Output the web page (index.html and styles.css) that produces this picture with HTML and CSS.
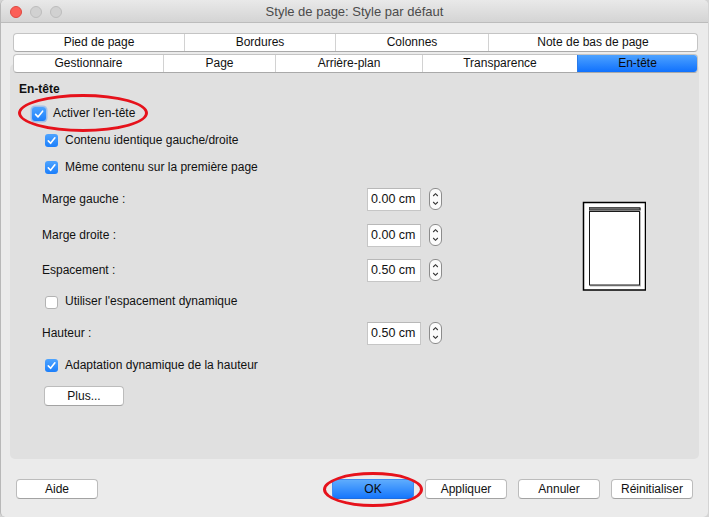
FILE: index.html
```html
<!DOCTYPE html>
<html lang="fr">
<head>
<meta charset="utf-8">
<title>Style de page</title>
<link rel="stylesheet" href="styles.css">
</head>
<body>
<div class="window">
  <div class="titlebar">
    <div class="lights">
      <span class="light red"></span>
      <span class="light gray"></span>
      <span class="light gray"></span>
    </div>
    <div class="title">Style de page: Style par défaut</div>
    <div></div>
  </div>

  <div class="tabs">
    <div class="tabrow r1">
      <div class="tab">Pied de page</div>
      <div class="tab">Bordures</div>
      <div class="tab">Colonnes</div>
      <div class="tab">Note de bas de page</div>
    </div>
    <div class="tabrow r2">
      <div class="tab">Gestionnaire</div>
      <div class="tab">Page</div>
      <div class="tab">Arrière-plan</div>
      <div class="tab">Transparence</div>
      <div class="tab sel">En-tête</div>
    </div>
  </div>

  <div class="panel">
    <div class="form">
      <div class="row h-head"><span class="section">En-tête</span></div>
      <div class="row h32 ind1">
        <span class="cb on focus"><svg width="14" height="14" viewBox="0 0 14 14"><path d="M3.6 7.4 L6 9.9 L10.6 4.2" fill="none" stroke="#fff" stroke-width="1.6" stroke-linecap="round" stroke-linejoin="round"/></svg></span>
        <span class="lbl">Activer l'en-tête</span>
      </div>
      <div class="row h22 ind2">
        <span class="cb on"><svg width="13" height="13" viewBox="0 0 13 13"><path d="M3.3 6.9 L5.6 9.3 L9.9 3.8" fill="none" stroke="#fff" stroke-width="1.6" stroke-linecap="round" stroke-linejoin="round"/></svg></span>
        <span class="lbl">Contenu identique gauche/droite</span>
      </div>
      <div class="row h32 ind2">
        <span class="cb on"><svg width="13" height="13" viewBox="0 0 13 13"><path d="M3.3 6.9 L5.6 9.3 L9.9 3.8" fill="none" stroke="#fff" stroke-width="1.6" stroke-linecap="round" stroke-linejoin="round"/></svg></span>
        <span class="lbl">Même contenu sur la première page</span>
      </div>
      <div class="row h32 field">
        <span class="flabel">Marge gauche :</span>
        <span class="input">0.00 cm</span>
        <span class="spin"><svg width="13" height="22" viewBox="0 0 13 22"><rect x="0.5" y="0.5" width="12" height="21" rx="5.5" fill="#fbfbfb" stroke="#8c8c8c"/><path d="M4.2 8 L6.5 5.7 L8.8 8" fill="none" stroke="#333" stroke-width="1.1"/><path d="M4.2 14 L6.5 16.3 L8.8 14" fill="none" stroke="#333" stroke-width="1.1"/></svg></span>
      </div>
      <div class="row h40 field">
        <span class="flabel">Marge droite :</span>
        <span class="input">0.00 cm</span>
        <span class="spin"><svg width="13" height="22" viewBox="0 0 13 22"><rect x="0.5" y="0.5" width="12" height="21" rx="5.5" fill="#fbfbfb" stroke="#8c8c8c"/><path d="M4.2 8 L6.5 5.7 L8.8 8" fill="none" stroke="#333" stroke-width="1.1"/><path d="M4.2 14 L6.5 16.3 L8.8 14" fill="none" stroke="#333" stroke-width="1.1"/></svg></span>
      </div>
      <div class="row h30 field">
        <span class="flabel">Espacement :</span>
        <span class="input">0.50 cm</span>
        <span class="spin"><svg width="13" height="22" viewBox="0 0 13 22"><rect x="0.5" y="0.5" width="12" height="21" rx="5.5" fill="#fbfbfb" stroke="#8c8c8c"/><path d="M4.2 8 L6.5 5.7 L8.8 8" fill="none" stroke="#333" stroke-width="1.1"/><path d="M4.2 14 L6.5 16.3 L8.8 14" fill="none" stroke="#333" stroke-width="1.1"/></svg></span>
      </div>
      <div class="row h32 ind2">
        <span class="cb off"></span>
        <span class="lbl">Utiliser l'espacement dynamique</span>
      </div>
      <div class="row h32 field">
        <span class="flabel">Hauteur :</span>
        <span class="input">0.50 cm</span>
        <span class="spin"><svg width="13" height="22" viewBox="0 0 13 22"><rect x="0.5" y="0.5" width="12" height="21" rx="5.5" fill="#fbfbfb" stroke="#8c8c8c"/><path d="M4.2 8 L6.5 5.7 L8.8 8" fill="none" stroke="#333" stroke-width="1.1"/><path d="M4.2 14 L6.5 16.3 L8.8 14" fill="none" stroke="#333" stroke-width="1.1"/></svg></span>
      </div>
      <div class="row h32 ind2">
        <span class="cb on"><svg width="13" height="13" viewBox="0 0 13 13"><path d="M3.3 6.9 L5.6 9.3 L9.9 3.8" fill="none" stroke="#fff" stroke-width="1.6" stroke-linecap="round" stroke-linejoin="round"/></svg></span>
        <span class="lbl">Adaptation dynamique de la hauteur</span>
      </div>
      <div class="row h29 ind3">
        <span class="btn plus">Plus...</span>
      </div>
    </div>
    <div class="preview">
      <svg width="64" height="90" viewBox="0 0 64 90">
        <rect x="1.5" y="1.5" width="62" height="87.5" fill="#fff" stroke="#000" stroke-width="1.5"/>
        <rect x="8" y="10.5" width="51" height="75" fill="#b8b8b8"/>
        <rect x="7.5" y="10.5" width="50" height="73.5" fill="#fff" stroke="#1a1a1a" stroke-width="1"/>
        <rect x="7" y="6.5" width="52" height="3" fill="#6a6a6a"/>
        <rect x="7.5" y="6.5" width="50" height="2.5" fill="none" stroke="#333" stroke-width="0.8"/>
      </svg>
    </div>
  </div>

  <div class="footer">
    <span class="btn">Aide</span>
    <div class="group">
      <span class="btn default">OK</span>
      <span class="btn">Appliquer</span>
      <span class="btn">Annuler</span>
      <span class="btn">Réinitialiser</span>
    </div>
  </div>

  <div class="mark mark1"></div>
  <div class="mark mark2"></div>
</div>
</body>
</html>
```

FILE: styles.css
```css
* { box-sizing: border-box; }

html, body {
  margin: 0;
  padding: 0;
}

body {
  width: 709px;
  height: 517px;
  overflow: hidden;
  background: #d4d4d4;
  font-family: "Liberation Sans", Arial, sans-serif;
  font-size: 12px;
  color: #111;
}

.window {
  position: relative;
  width: 708px;
  height: 517px;
  background: #ebebeb;
  border-radius: 5px;
  border-left: 1px solid #b8b8b8;
  display: flex;
  flex-direction: column;
}

.titlebar {
  height: 23px;
  flex: none;
  display: grid;
  grid-template-columns: 1fr auto 1fr;
  align-items: center;
  background: linear-gradient(#e9e9e9, #d4d4d4);
  border-bottom: 1px solid #bcbcbc;
  border-radius: 5px 5px 0 0;
}

.lights {
  display: flex;
  gap: 8px;
  padding-left: 9px;
  padding-top: 1px;
}

.light {
  width: 12px;
  height: 12px;
  border-radius: 50%;
}

.light.red {
  background: #fc5f57;
  border: 1px solid #de4840;
}

.light.gray {
  background: #d1d1d1;
  border: 1px solid #bdbdbd;
}

.title {
  font-size: 13px;
  color: #4b4b4b;
  padding-top: 1px;
}

.tabs {
  position: relative;
  z-index: 1;
  margin: 10px 0 0 12px;
  width: 685px;
  display: flex;
  flex-direction: column;
  gap: 2px;
}

.tabrow {
  display: grid;
  height: 19px;
  background: #fff;
  border: 1px solid #c4c4c4;
  border-bottom-color: #a9a9a9;
  border-radius: 4px;
  overflow: hidden;
}

.tabrow.r1 { grid-template-columns: 170px 151px 153px 1fr; }
.tabrow.r2 { grid-template-columns: 149px 112px 147px 155px 1fr; }

.tab {
  border-left: 1px solid #d2d2d2;
  text-align: center;
  line-height: 17px;
  white-space: nowrap;
}

.tab:first-child { border-left: none; }

.tab.sel {
  background: linear-gradient(#4da2ff, #1071fd);
  border-left-color: #2a7ae8;
  color: #0a0a0a;
}

.panel {
  margin: -9px 0 0 9px;
  width: 689px;
  height: 395px;
  flex: none;
  background: #e0e0e0;
  border-radius: 5px;
  padding: 17px 0 0 9px;
  display: flex;
}

.form {
  width: 422px;
  display: flex;
  flex-direction: column;
}

.row {
  display: flex;
  align-items: center;
  flex: none;
}

.h-head { height: 16px; }
.h22 { height: 22px; }
.h29 { height: 29px; }
.h30 { height: 30px; }
.h32 { height: 32px; }
.h40 { height: 40px; }

.ind1 { padding-left: 13px; }
.ind2 { padding-left: 26px; }
.ind3 { padding-left: 25px; }

.section {
  font-weight: bold;
}

.cb {
  width: 13px;
  height: 13px;
  border-radius: 3px;
  flex: none;
  margin-right: 7px;
  display: flex;
  margin-top: 1px;
}

.cb.focus {
  width: 14px;
  height: 14px;
  box-shadow: 0 0 0 1.5px rgba(110, 165, 240, 0.55);
}

.cb.on {
  background: linear-gradient(#4ea4ff, #1c7ffb);
  border: none;
}

.cb.off {
  background: #fff;
  border: 1px solid #b3b3b3;
  margin-top: 3px;
}

.field {
  padding-left: 23px;
}

.flabel {
  width: 325px;
  flex: none;
}

.input {
  width: 54px;
  height: 23px;
  background: #fff;
  border: 1px solid #c6c6c6;
  border-top-color: #b8b8b8;
  padding-left: 3px;
  line-height: 21px;
  font-size: 12.5px;
  flex: none;
}

.spin {
  margin-left: 8px;
  height: 22px;
  display: flex;
}

.btn {
  width: 82px;
  height: 20px;
  background: #fff;
  border: 1px solid #bcbcbc;
  border-bottom-color: #a3a3a3;
  border-radius: 4px;
  text-align: center;
  line-height: 18px;
  color: #111;
  flex: none;
}

.btn.plus {
  width: 80px;
}

.btn.default {
  background: linear-gradient(#5eacfd, #1677fd);
  border-color: #3d8cf0;
  border-bottom-color: #1f6ee0;
  color: #0b0b0b;
}

.preview {
  margin-left: 141px;
  margin-top: 120px;
  display: flex;
  align-self: flex-start;
}

.footer {
  margin-top: 20px;
  height: 20px;
  flex: none;
  padding: 0 15px 0 15px;
  display: flex;
  justify-content: space-between;
}

.group {
  display: flex;
  gap: 11px;
}

.mark {
  position: absolute;
  border: 3px solid #e6121b;
  border-radius: 50%;
}

.mark1 {
  left: 17px;
  top: 94px;
  width: 130px;
  height: 38px;
}

.mark2 {
  left: 322px;
  top: 472px;
  width: 100px;
  height: 35px;
}
```
